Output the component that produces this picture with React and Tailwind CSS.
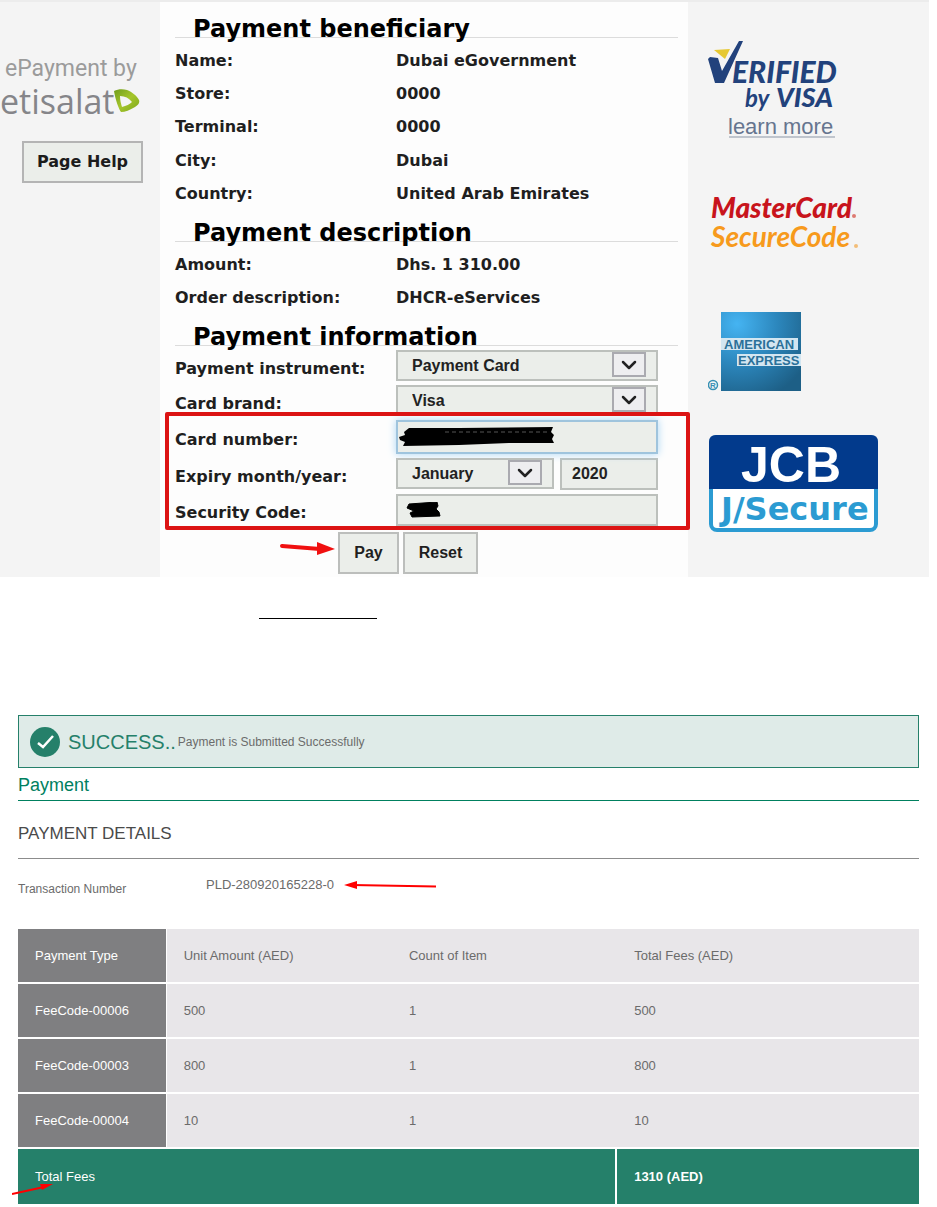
import React from 'react';
import { ChevronDown } from 'lucide-react';

const beneficiary = [
  ['Name:', 'Dubai eGovernment'],
  ['Store:', '0000'],
  ['Terminal:', '0000'],
  ['City:', 'Dubai'],
  ['Country:', 'United Arab Emirates'],
];

const description = [
  ['Amount:', 'Dhs. 1 310.00'],
  ['Order description:', 'DHCR-eServices'],
];

const fees = [
  { code: 'FeeCode-00006', unit: '500', count: '1', total: '500' },
  { code: 'FeeCode-00003', unit: '800', count: '1', total: '800' },
  { code: 'FeeCode-00004', unit: '10', count: '1', total: '10' },
];

const fieldClass =
  "w-full border-2 border-[#bcc0bc] bg-[#ebeeea] font-['Liberation_Sans',sans-serif] text-base font-bold text-[#222]";

const SectionTitle = ({ children }) => (
  <h2 className="h-[21px] border-b border-[#dcdcdc] pl-[18px] text-2xl leading-6 font-bold whitespace-nowrap text-black">
    {children}
  </h2>
);

const DetailList = ({ rows, className }) => (
  <dl className={`mt-1.5 grid ${className}`}>
    {rows.map(([label, value]) => (
      <div key={label} className="grid grid-cols-[221px_1fr] items-center">
        <dt>{label}</dt>
        <dd>{value}</dd>
      </div>
    ))}
  </dl>
);

const FormRow = ({ label, id, children }) => (
  <div className="grid grid-cols-[221px_1fr] items-center pr-5">
    <label htmlFor={id} className="pt-1.5">{label}</label>
    {children}
  </div>
);

const SelectBox = ({ id, value, className = '' }) => (
  <div className={`relative ${className}`}>
    <select id={id} defaultValue={value} className={`${fieldClass} h-[31px] appearance-none pl-3.5`}>
      <option>{value}</option>
    </select>
    <span className="pointer-events-none absolute top-0.5 right-3 flex h-[25px] w-[34px] items-center justify-center border-2 border-[#aaaab0] bg-[#eeeef0]">
      <ChevronDown className="h-6 w-6 shrink-0 text-[#222]" strokeWidth={2.5} />
    </span>
  </div>
);

const EtisalatMark = () => (
  <svg viewBox="0 0 26 24" className="h-6 w-[26px]" aria-hidden="true">
    <defs>
      <linearGradient id="leaf" x1="0" y1="0" x2="1" y2="1">
        <stop offset="0" stopColor="#6f9d1c" />
        <stop offset="0.5" stopColor="#a6c62b" />
        <stop offset="1" stopColor="#7ba51c" />
      </linearGradient>
    </defs>
    <path
      fillRule="evenodd"
      fill="url(#leaf)"
      d="M0 2C4 0 9 0 13 1C18 3 23 7 25 11C26 14 24 16 21 18C16 21 11 23 7 23C5 21 1 9 0 2ZM6 7C6 11 7 15 8 18C12 17 16 15 18 13C15 9 11 7 6 7Z"
    />
  </svg>
);

const VerifiedByVisa = () => (
  <a href="#visa" className="block">
    <svg viewBox="0 0 134 98" className="h-[98px] w-[134px]">
      <path d="M6 10L22 9L17 19Z" fill="#e6c832" />
      <path d="M0 19L2 17L10 18L14 31L31 1L35 1L16 43L7 43Z" fill="#22427c" />
      <g fill="#22427c" fontFamily="Lato, sans-serif" fontWeight="900" fontStyle="italic">
        <text x="24" y="43" fontSize="30">ERIFIED</text>
        <text x="37" y="67" fontSize="24" fontWeight="bold">by</text>
        <text x="68" y="67" fontSize="27">VISA</text>
      </g>
      <text x="20" y="94" fontFamily="Liberation Sans, sans-serif" fontSize="22" fill="#66758f">learn more</text>
      <path d="M21 97H127" stroke="#8b96a6" strokeWidth="1" />
    </svg>
  </a>
);

const MasterCardSecureCode = () => (
  <svg viewBox="0 0 154 70" className="h-[70px] w-[154px]">
    <g fontFamily="Lato, sans-serif" fontStyle="italic" fontSize="28">
      <text x="3" y="35" fill="#c8141c" fontWeight="900">MasterCard</text>
      <text x="3" y="64" fill="#f79a1c" fontWeight="bold">SecureCode</text>
    </g>
    <circle cx="146" cy="33" r="2" fill="#dd7a72" />
    <circle cx="148" cy="63" r="2" fill="#f3bd78" />
  </svg>
);

const AmericanExpress = () => (
  <svg viewBox="0 0 94 80" className="h-20 w-[94px]">
    <defs>
      <radialGradient id="amex" cx="0.2" cy="0.15" r="1">
        <stop offset="0" stopColor="#45b4f2" />
        <stop offset="0.5" stopColor="#2c87bd" />
        <stop offset="1" stopColor="#1d5f86" />
      </radialGradient>
    </defs>
    <rect x="13" y="0" width="80" height="79" fill="url(#amex)" />
    <rect x="13" y="26" width="77" height="12" fill="#d3e6f1" />
    <rect x="29" y="42" width="64" height="12" fill="#d3e6f1" />
    <g fontFamily="Liberation Sans, sans-serif" fontWeight="bold" fontSize="13" fill="#2b7199">
      <text x="16" y="37">AMERICAN</text>
      <text x="30" y="53">EXPRESS</text>
    </g>
    <circle cx="5" cy="73" r="4.500" fill="none" stroke="#3790b4" strokeWidth="1.500" />
    <text x="2" y="76" fontFamily="Liberation Sans, sans-serif" fontWeight="bold" fontSize="8" fill="#3790b4">R</text>
  </svg>
);

const JcbSecure = () => (
  <svg viewBox="0 0 172 98" className="h-[98px] w-[172px]">
    <rect x="3" y="2" width="165" height="93" rx="6" fill="#fff" stroke="#2b9bd2" strokeWidth="4" />
    <path d="M1 54V7Q1 0 8 0H163Q170 0 170 7V54Z" fill="#023a8c" />
    <text x="33" y="47" fontFamily="Liberation Sans, sans-serif" fontWeight="bold" fontSize="50" fill="#fff">JCB</text>
    <text x="13" y="85" fontFamily="DejaVu Sans, sans-serif" fontWeight="bold" fontSize="32" fill="#2b9bd2">J/Secure</text>
  </svg>
);

const PaymentPage = () => (
  <section className="mr-2 grid grid-cols-[160px_minmax(528px,1fr)_241px] border-t-2 border-[#ececec] bg-[#f4f4f4]">
    <aside className="pt-[53px]">
      <p className="pl-[5px] font-['Roboto',sans-serif] text-[23px] leading-7 text-[#9b9b9b]">ePayment by</p>
      <div className="flex items-center">
        <span className="font-['Open_Sans',sans-serif] text-[34px] leading-9 text-[#858589]">etisalat</span>
        <EtisalatMark />
      </div>
      <button
        type="button"
        className="mt-[22px] ml-[22px] h-[42px] w-[121px] border-2 border-[#b4b4b4] bg-[#ebeeea] font-['DejaVu_Sans',sans-serif] text-base font-bold text-[#1c1c1c]"
      >
        Page Help
      </button>
    </aside>

    <main className="bg-[#fdfdfd] pt-[15px] pr-2.5 pb-[3px] pl-[15px] font-['DejaVu_Sans',sans-serif] text-base leading-5 font-bold text-[#1f1f1f]">
      <SectionTitle>Payment beneficiary</SectionTitle>
      <DetailList rows={beneficiary} className="h-[167px]" />

      <div className="mt-2.5">
        <SectionTitle>Payment description</SectionTitle>
      </div>
      <DetailList rows={description} className="h-[67px]" />

      <div className="mt-2.5">
        <SectionTitle>Payment information</SectionTitle>
      </div>
      <form className="mt-1 flex flex-col gap-1" onSubmit={(e) => e.preventDefault()}>
        <FormRow label="Payment instrument:" id="instrument">
          <SelectBox id="instrument" value="Payment Card" />
        </FormRow>
        <FormRow label="Card brand:" id="brand">
          <SelectBox id="brand" value="Visa" />
        </FormRow>

        {/* Highlighted card fields */}
        <div className="relative flex flex-col gap-1">
          <FormRow label="Card number:" id="card">
            <div className="relative">
              <input
                id="card"
                type="text"
                className={`${fieldClass} block h-[34px] border-[#9fc4dd]! px-2 shadow-[0_0_8px_#a9d6f5]`}
              />
              <svg viewBox="0 0 156 20" className="pointer-events-none absolute top-[7px] left-[3px] h-5 w-[156px]">
                <path
                  d="M10 1L60 1L154 0L152 5L155 8L153 12L155 16L110 16L60 18L4 19L6 15L1 13L0 10L6 8L5 5Z"
                  fill="#000"
                />
                <path d="M46 5H150" stroke="#555" strokeWidth="1" strokeDasharray="4 3" />
              </svg>
            </div>
          </FormRow>
          <FormRow label="Expiry month/year:" id="month">
            <div className="flex gap-1.5">
              <SelectBox id="month" value="January" className="flex-1" />
              <input
                type="text"
                aria-label="Expiry year"
                defaultValue="2020"
                className={`${fieldClass} h-8 w-[98px]! px-2.5`}
              />
            </div>
          </FormRow>
          <FormRow label="Security Code:" id="code">
            <div className="relative">
              <input id="code" type="text" className={`${fieldClass} block h-8 px-2`} />
              <svg viewBox="0 0 35 16" className="pointer-events-none absolute top-2 left-2.5 h-4 w-[35px]">
                <path d="M3 2L31 0L32 4L30 7L33 10L34 14L6 15L4 11L8 9L1 6Z" fill="#000" stroke="#000" />
              </svg>
            </div>
          </FormRow>
          <div className="pointer-events-none absolute -top-2 -right-3 -bottom-1 -left-2.5 rounded-xs border-4 border-[#dc1414]" />
        </div>

        <div className="mt-0.5 flex">
          <svg viewBox="0 0 163 42" className="h-[42px] w-[163px]">
            <path d="M107 14L145 17" stroke="#f01010" strokeWidth="4" strokeLinecap="round" />
            <path d="M142 10L160 17L142 23Z" fill="#f01010" />
          </svg>
          <button
            type="submit"
            className="h-[42px] w-[61px] border-2 border-[#bcbebc] bg-[#ebeeea] font-['Liberation_Sans',sans-serif] text-base font-bold"
          >
            Pay
          </button>
          <button
            type="reset"
            className="ml-1 h-[42px] w-[75px] border-2 border-[#bcbebc] bg-[#ebeeea] font-['Liberation_Sans',sans-serif] text-base font-bold"
          >
            Reset
          </button>
        </div>
      </form>
    </main>

    <aside className="pt-[38px] pl-5">
      <VerifiedByVisa />
      <div className="mt-[45px]">
        <MasterCardSecureCode />
      </div>
      <div className="mt-[59px]">
        <AmericanExpress />
      </div>
      <div className="mt-[43px]">
        <JcbSecure />
      </div>
    </aside>
  </section>
);

const Receipt = () => (
  <section className="mr-[18px] ml-[18px] font-['Liberation_Sans',sans-serif] text-[#6b6b6b]">
    <div className="flex h-[53px] items-center border border-[#25806a] bg-[#dfebe8] pl-2.5">
      <svg viewBox="0 0 32 32" className="h-8 w-8" aria-hidden="true">
        <circle cx="16" cy="16" r="15" fill="#25806a" />
        <path d="M9 17L14 21L24 10" fill="none" stroke="#fff" strokeWidth="2.500" />
      </svg>
      <strong className="ml-[7px] text-xl font-normal text-[#25806a]">SUCCESS..</strong>
      <span className="ml-0.5 text-xs">Payment is Submitted Successfully</span>
    </div>

    <h1 className="border-b border-[#00805f] pt-[5px] pb-[3px] text-lg leading-6 text-[#00805f]">Payment</h1>
    <h2 className="mt-[21px] border-b border-[#8c8c8c] pb-3 text-[17px] leading-6 text-[#4a4a4a]">PAYMENT DETAILS</h2>

    <div className="flex h-[70px] items-start pt-4">
      <span className="w-[188px] pt-1 text-xs leading-5">Transaction Number</span>
      <span className="text-[13px] leading-5">PLD-280920165228-0</span>
      <svg viewBox="0 0 92 8" className="mt-1.5 ml-2.5 h-2 w-[92px]">
        <path d="M8 4L92 5.500" stroke="#f00" strokeWidth="2" />
        <path d="M0 4L13 0V8Z" fill="#f00" />
      </svg>
    </div>

    <table className="w-full table-fixed border-separate border-spacing-0 text-left text-[13px]">
      <colgroup>
        <col className="w-[16.5%]" />
        <col className="w-1/4" />
        <col className="w-1/4" />
        <col />
      </colgroup>
      <thead>
        <tr className="h-[55px] bg-[#e8e6e9]">
          <th className="border-r border-b-2 border-white bg-[#7f7f81] pl-[17px] font-normal text-white">Payment Type</th>
          <th className="border-b-2 border-white pl-[17px] font-normal">Unit Amount (AED)</th>
          <th className="border-b-2 border-white pl-[17px] font-normal">Count of Item</th>
          <th className="border-b-2 border-white pl-[17px] font-normal">Total Fees (AED)</th>
        </tr>
      </thead>
      <tbody>
        {fees.map((fee) => (
          <tr key={fee.code} className="h-[55px] bg-[#e8e6e9]">
            <td className="border-r border-b-2 border-white bg-[#7f7f81] pl-[17px] text-white">{fee.code}</td>
            <td className="border-b-2 border-white pl-[17px]">{fee.unit}</td>
            <td className="border-b-2 border-white pl-[17px]">{fee.count}</td>
            <td className="border-b-2 border-white pl-[17px]">{fee.total}</td>
          </tr>
        ))}
      </tbody>
      <tfoot>
        <tr className="h-[55px] bg-[#25806a] text-white">
          <td colSpan={3} className="relative border-r-2 border-white pl-[17px]">
            Total Fees
            <svg viewBox="0 0 42 14" className="absolute top-[34px] -left-1.5 h-3.5 w-[42px]">
              <path d="M0 11L32 4" stroke="#f00" strokeWidth="2" />
              <path d="M28 1L41 1L30 7Z" fill="#f00" />
            </svg>
          </td>
          <td className="pl-[17px] font-bold">1310 (AED)</td>
        </tr>
      </tfoot>
    </table>
  </section>
);

export default function App() {
  return (
    <div className="bg-white pb-[3px]">
      <PaymentPage />
      <hr className="mt-[41px] mb-24 ml-[259px] w-[118px] border-black" />
      <Receipt />
    </div>
  );
}
